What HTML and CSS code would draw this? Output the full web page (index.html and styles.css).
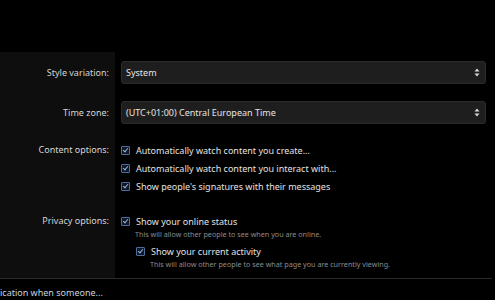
FILE: index.html
```html
<!DOCTYPE html>
<html lang="en">
<head>
  <meta charset="UTF-8" />
  <title>Preferences</title>
  <link rel="stylesheet" href="styles.css">
</head>
<body>
  <div class="top-space"></div>

  <form class="pref-form">
    <div class="pref-row">
      <div class="pref-label">Style variation:</div>
      <div class="pref-field">
        <div class="select-box">
          <span>System</span>
          <svg class="select-arrows" width="6" height="9" viewBox="0 0 6 9"><path d="M3 0.5 L5.5 3.5 H0.5 Z M3 8.5 L5.5 5.5 H0.5 Z" fill="#d8d8d8"/></svg>
        </div>
      </div>
    </div>

    <div class="pref-row">
      <div class="pref-label">Time zone:</div>
      <div class="pref-field">
        <div class="select-box">
          <span>(UTC+01:00) Central European Time</span>
          <svg class="select-arrows" width="6" height="9" viewBox="0 0 6 9"><path d="M3 0.5 L5.5 3.5 H0.5 Z M3 8.5 L5.5 5.5 H0.5 Z" fill="#d8d8d8"/></svg>
        </div>
      </div>
    </div>

    <div class="pref-row">
      <div class="pref-label line">Content options:</div>
      <div class="pref-field">
        <label class="check"><span class="box"></span>Automatically watch content you create...</label>
        <label class="check"><span class="box"></span>Automatically watch content you interact with...</label>
        <label class="check"><span class="box"></span>Show people's signatures with their messages</label>
      </div>
    </div>

    <div class="pref-row last">
      <div class="pref-label line">Privacy options:</div>
      <div class="pref-field">
        <label class="check"><span class="box"></span>Show your online status</label>
        <div class="hint">This will allow other people to see when you are online.</div>
        <div class="nested">
          <label class="check"><span class="box"></span>Show your current activity</label>
          <div class="hint">This will allow other people to see what page you are currently viewing.</div>
        </div>
      </div>
    </div>
  </form>

  <div class="next-block">ication when someone...</div>
</body>
</html>
```

FILE: styles.css
```css
body {
  margin: 0;
  background-color: #000;
  color: #e2e2e2;
  font-family: 'Noto Sans', sans-serif;
  font-size: 9px;
  overflow: hidden;
}

.top-space {
  height: 52px;
}

.pref-form {
  margin-right: 3px;
  border-bottom: 1px solid #2a2a2a;
}

.pref-row {
  display: flex;
}

.pref-label {
  width: 109px;
  flex-shrink: 0;
  padding-right: 6px;
  padding-top: 8px;
  padding-bottom: 9px;
  background-color: #0e0e0e;
  text-align: right;
  color: #d4d4d4;
  line-height: 23px;
}

.pref-row:first-child .pref-label {
  padding-top: 9px;
}

.pref-row:first-child .pref-field {
  padding-top: 9px;
}

.pref-label.line {
  line-height: 18px;
}

.pref-field {
  flex: 1;
  padding: 8px 6px 9px 6px;
}

.select-box {
  display: flex;
  align-items: center;
  justify-content: space-between;
  height: 21px;
  padding: 0 5px 0 4px;
  background-color: #1e1e1e;
  border: 1px solid #2b2b2b;
  border-radius: 3px;
  color: #e4e4e4;
}

.check {
  display: flex;
  align-items: center;
  height: 18px;
  color: #e2e2e2;
}

.box {
  width: 7px;
  height: 7px;
  margin-right: 6px;
  border: 1px solid #4c6e98;
  border-radius: 1px;
  background-color: #101828;
  position: relative;
}

.box::after {
  content: "";
  position: absolute;
  left: 2px;
  top: 0px;
  width: 2px;
  height: 4px;
  border: solid #8fb4e0;
  border-width: 0 1px 1px 0;
  transform: rotate(40deg);
}

.hint {
  font-size: 7.2px;
  line-height: 10px;
  margin-top: -1px;
  margin-left: 14px;
  color: #8c8c8c;
}

.nested {
  margin-top: 3px;
  margin-left: 15px;
}

.pref-row.last .pref-field {
  padding-bottom: 9px;
}

.next-block {
  padding: 7px 0;
  color: #c9d2de;
  font-size: 9px;
}
```
